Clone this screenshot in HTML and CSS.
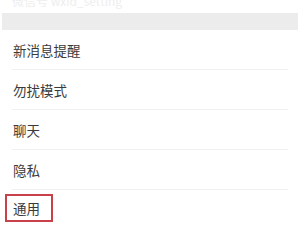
FILE: index.html
```html
<!DOCTYPE html>
<html lang="zh">
<head>
<meta charset="utf-8">
<link rel="stylesheet" href="styles.css">
</head>
<body>
<div class="page">
  <div class="top"><span class="faint">微信号 wxid_setting</span></div>
  <div class="band"></div>
  <ul class="list">
    <li class="row"><span>新消息提醒</span></li>
    <li class="row"><span>勿扰模式</span></li>
    <li class="row"><span>聊天</span></li>
    <li class="row"><span>隐私</span></li>
    <li class="row last"><span class="hl">通用</span></li>
  </ul>
</div>
</body>
</html>
```
FILE: styles.css
```css
html, body {
  margin: 0;
  padding: 0;
  background: #ffffff;
}
.page {
  width: 300px;
  height: 225px;
  overflow: hidden;
  font-family: "Noto Sans CJK SC", "Noto Sans", sans-serif;
}
.top {
  height: 13px;
  overflow: hidden;
  position: relative;
}
.faint {
  position: absolute;
  left: 12px;
  top: -8px;
  font-size: 12px;
  color: #eeeeee;
  white-space: nowrap;
}
.band {
  height: 17px;
  margin-left: 2px;
  margin-right: 2px;
  background: #ececec;
}
.list {
  list-style: none;
  margin: 0;
  padding: 0;
}
.row {
  height: 39px;
  display: flex;
  align-items: center;
  margin-right: 12px;
  border-bottom: 1px solid #f1f1f1;
  font-size: 13.5px;
  color: #3a3a3a;
}
.row:not(.last) {
  margin-left: 12px;
  padding-left: 1px;
}
.row.last {
  border-bottom: none;
  padding-left: 5px;
  align-items: flex-start;
}
.hl {
  display: inline-flex;
  align-items: center;
  height: 24px;
  margin-top: 4px;
  padding: 0 11px 0 6px;
  border: 2px solid #c8404a;
}
```
